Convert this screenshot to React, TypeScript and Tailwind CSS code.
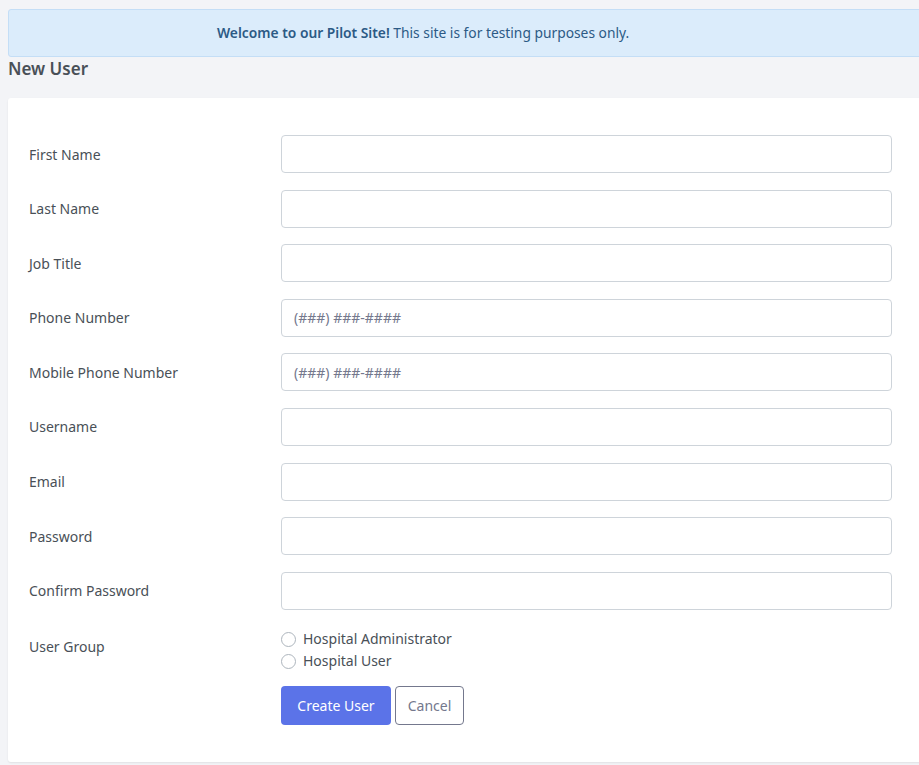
const fields = [
  { label: "First Name" },
  { label: "Last Name" },
  { label: "Job Title" },
  { label: "Phone Number", placeholder: "(###) ###-####" },
  { label: "Mobile Phone Number", placeholder: "(###) ###-####" },
  { label: "Username" },
  { label: "Email" },
  { label: "Password" },
  { label: "Confirm Password" },
];

export default function App() {
  return (
    <div
      className="w-[919px] h-[765px] overflow-hidden bg-[#f3f4f7] text-[#495057]"
      style={{ fontFamily: '"Noto Sans", "Open Sans", sans-serif' }}
    >
      <div className="w-[1000px] pl-2 pt-[9px]">
        {/* Pilot banner */}
        <div className="h-[48px] flex items-center pl-[208px] bg-[#dbecfb] border border-[#c4def6] rounded-[3px] text-[13.8px] text-[#2c5a85]">
          <span>
            <b className="font-semibold">Welcome to our Pilot Site!</b> This site is for testing purposes only.
          </span>
        </div>

        <h1 className="mt-[1px] text-[17px] leading-[22px] font-semibold text-[#495057]">New User</h1>

        {/* Form card */}
        <div className="mt-[18px] h-[664px] bg-white rounded-[3px] shadow-[0_1px_2px_rgba(0,0,0,0.08)] pl-[21px] pt-[37px]">
          <div className="flex flex-col gap-[16.6px] w-[863px]">
            {fields.map((f) => (
              <div key={f.label} className="flex items-center">
                <label className="w-[252px] text-[14px]">{f.label}</label>
                <input
                  type="text"
                  placeholder={f.placeholder}
                  className="w-[611px] h-[38px] px-3 border border-[#ced4da] rounded-[4px] text-[14px] placeholder:text-[#74788d] outline-none"
                />
              </div>
            ))}

            <div className="flex items-start mt-[2px]">
              <label className="w-[252px] text-[14px] leading-[22px] pt-[8px]">User Group</label>
              <div className="flex flex-col text-[14px] leading-[22px]">
                {["Hospital Administrator", "Hospital User"].map((g) => (
                  <label key={g} className="flex items-center gap-[7px]">
                    <span className="w-[15px] h-[15px] rounded-full border border-[#adb5bd] bg-white" />
                    {g}
                  </label>
                ))}
              </div>
            </div>

            <div className="flex pl-[252px] gap-[4px] -mt-[3px]">
              <button className="w-[110px] h-[39px] rounded-[4px] bg-[#5b73e8] text-white text-[14px]">
                Create User
              </button>
              <button className="w-[69px] h-[39px] rounded-[4px] border border-[#74788d] text-[#74788d] text-[14px]">
                Cancel
              </button>
            </div>
          </div>
        </div>
      </div>
    </div>
  );
}
